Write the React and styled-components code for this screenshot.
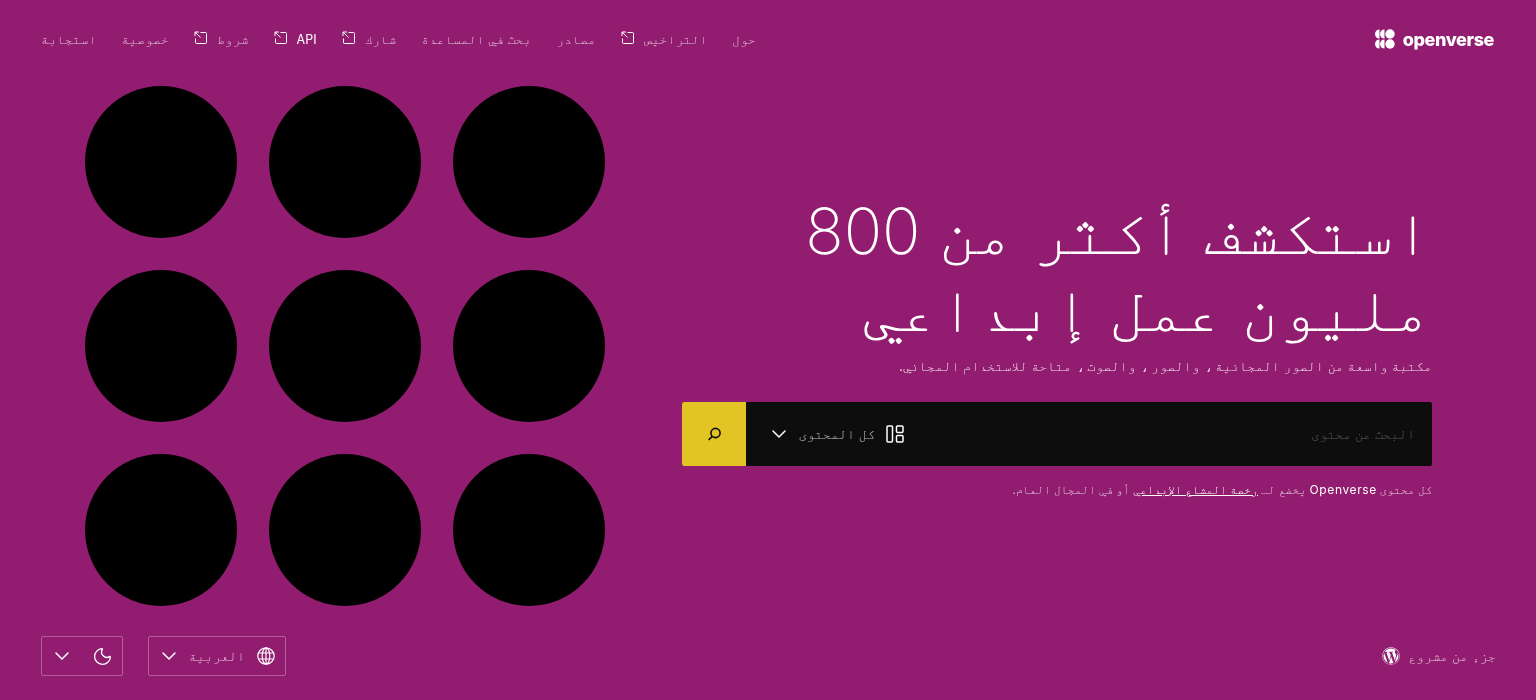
import styled, { createGlobalStyle, css } from "styled-components";
import { ChevronDown, Moon } from "lucide-react";
import { FaWordpress } from "react-icons/fa";

const GlobalStyle = createGlobalStyle`
  html, body {
    margin: 0;
    background: #921c6f;
  }
  * {
    box-sizing: border-box;
  }
`;

const fonts = `Inter, FreeMono, monospace`;

// own layer, so the text gets greyscale antialiasing like the reference
const ownLayer = css`
  will-change: transform;
`;

const Page = styled.div`
  direction: rtl;
  display: flex;
  flex-direction: column;
  height: 700px;
  overflow: hidden;
  background: #921c6f;
  color: #fff;
  font-family: ${fonts};
`;

const Header = styled.header`
  ${ownLayer}
  display: flex;
  align-items: center;
  justify-content: space-between;
  height: 80px;
  padding: 0 42px 2px 41px;
`;

const Logo = styled.a`
  display: flex;
  align-items: center;
  direction: ltr;
  gap: 8px;
  font-size: 18px;
  font-weight: 800;
  letter-spacing: -0.4px;
  color: #fff;
`;

const Nav = styled.nav`
  display: flex;
  align-items: center;
  gap: 25px;
`;

const NavLink = styled.a`
  display: flex;
  align-items: center;
  gap: 9px;
  font-size: ${(p) => (p.$bright ? "12.5px" : "13.2px")};
  color: ${(p) => (p.$bright ? "#fff" : "rgba(255, 255, 255, 0.7)")};

  svg {
    margin-top: -3px;
    color: #fff;
  }
`;

const Main = styled.main`
  flex: 1;
  display: flex;
  align-items: center;
  justify-content: space-between;
  padding: 0 104px 24px 85px;
`;

const Hero = styled.section`
  ${ownLayer}
  width: 750px;
  padding-bottom: 1px;
`;

const Title = styled.h1`
  margin: 0;
  font-size: 63.6px;
  font-weight: 200;
  line-height: 77px;
`;

const Lead = styled.p`
  margin: 10px 0 0;
  font-size: 13.44px;
  line-height: 20px;
  color: rgba(255, 255, 255, 0.85);
`;

const SearchBar = styled.form`
  display: flex;
  align-items: center;
  height: 64px;
  margin-top: 26px;
  background: #0d0d0d;
  border-radius: 2px;
`;

const Placeholder = styled.div`
  flex: 1;
  padding-right: 17px;
  font-size: 13.33px;
  color: rgba(255, 255, 255, 0.3);
`;

const TypeButton = styled.div`
  display: flex;
  align-items: center;
  gap: 11px;
  font-size: 13.33px;
  color: rgba(255, 255, 255, 0.72);

  svg {
    color: #fff;
  }

  svg:last-child {
    margin-right: -3px;
  }
`;

const SearchButton = styled.button`
  display: flex;
  align-items: center;
  justify-content: center;
  width: 64px;
  height: 64px;
  margin-right: 21px;
  border: 0;
  border-radius: 2px 0 0 2px;
  background: #e2c425;
  color: #0d0d0d;
`;

const License = styled.p`
  margin: 15px 0 0;
  font-size: 11.6px;
  line-height: 18px;
  color: rgba(255, 255, 255, 0.75);

  span {
    font-size: 12px;
    letter-spacing: 0.6px;
    color: #fff;
  }

  a {
    text-decoration: underline;
    color: #fff;
  }
`;

const Circles = styled.div`
  display: grid;
  grid-template-columns: repeat(3, 152px);
  gap: 32px;
`;

const Circle = styled.div`
  width: 152px;
  height: 152px;
  border-radius: 50%;
  background: #000;
`;

const Footer = styled.footer`
  ${ownLayer}
  display: flex;
  align-items: center;
  justify-content: space-between;
  height: 40px;
  margin-bottom: 24px;
  padding: 0 40px 0 41px;
`;

const Credit = styled.a`
  display: flex;
  align-items: center;
  gap: 8px;
  font-size: 13.4px;
  color: rgba(255, 255, 255, 0.75);

  svg {
    color: #fff;
  }
`;

const Controls = styled.div`
  display: flex;
  gap: 25px;
`;

const Select = styled.div`
  display: flex;
  align-items: center;
  gap: 8px;
  justify-content: space-between;
  width: ${(p) => p.$width}px;
  height: 40px;
  padding: 0 9px 0 8px;
  border: 1px solid rgba(255, 255, 255, 0.3);
  border-radius: 2px;
  font-size: 13.33px;
  color: rgba(255, 255, 255, 0.7);

  svg {
    color: #fff;
    flex: none;
  }
`;

const SelectLabel = styled.span`
  flex: 1;
  margin-right: 3px;
`;

const ExternalIcon = () => (
  <svg width="14" height="14" viewBox="0 0 14 14" fill="none" stroke="currentColor" strokeWidth="1">
    <path d="M6.5 1.5h5a1 1 0 0 1 1 1v9a1 1 0 0 1-1 1h-9a1 1 0 0 1-1-1V7.5" />
    <path d="M1 1l5.5 5.5M1 1v4M1 1h4" />
  </svg>
);

const LogoMark = () => (
  <svg width="20" height="20" viewBox="0 0 20 20" fill="#fff">
    <path d="M4.5.5a4.5 4.5 0 0 0 0 9z" />
    <path d="M9.5.5a4.5 4.5 0 0 0 0 9z" />
    <circle cx="15" cy="5" r="4.7" />
    <path d="M4.5 10.5a4.5 4.5 0 0 0 0 9z" />
    <path d="M9.5 10.5a4.5 4.5 0 0 0 0 9z" />
    <circle cx="15" cy="15" r="4.7" />
  </svg>
);

const SearchIcon = () => (
  <svg width="16" height="16" viewBox="0 0 16 16" fill="none" stroke="currentColor" strokeWidth="1.6">
    <circle cx="9.5" cy="7" r="4.6" />
    <path d="M6.2 10.4L2.6 14" />
  </svg>
);

const ContentIcon = () => (
  <svg width="18" height="18" viewBox="0 0 18 18" fill="none" stroke="currentColor" strokeWidth="1.5">
    <rect x="1" y="1" width="5.5" height="16" rx="1" />
    <rect x="10.5" y="1" width="6.5" height="6.5" rx="1" />
    <rect x="10.5" y="10.5" width="6.5" height="6.5" rx="1" />
  </svg>
);

const GlobeIcon = () => (
  <svg width="20" height="20" viewBox="0 0 20 20" fill="none" stroke="currentColor" strokeWidth="1.2">
    <circle cx="10" cy="10" r="8.2" />
    <ellipse cx="10" cy="10" rx="3.8" ry="8.2" />
    <path d="M10 1.8v16.4M2.6 7h14.8M2.6 13h14.8" />
  </svg>
);

const navItems = [
  { label: "حول" },
  { label: "التراخيص", external: true },
  { label: "مصادر" },
  { label: "بحث في المساعدة" },
  { label: "شارك", external: true },
  { label: "API", external: true, bright: true },
  { label: "شروط", external: true },
  { label: "خصوصية" },
  { label: "استجابة" },
];

const App = () => {
  return (
    <Page>
      <GlobalStyle />
      <Header>
        <Logo>
          <LogoMark />
          openverse
        </Logo>
        <Nav>
          {navItems.map((item) => (
            <NavLink key={item.label} $bright={item.bright}>
              {item.label}
              {item.external && <ExternalIcon />}
            </NavLink>
          ))}
        </Nav>
      </Header>
      <Main>
        <Hero>
          <Title>استكشف أكثر من 800 مليون عمل إبداعي</Title>
          <Lead>مكتبة واسعة من الصور المجانية ، والصور ، والصوت ، متاحة للاستخدام المجاني.</Lead>
          <SearchBar>
            <Placeholder>البحث عن محتوى</Placeholder>
            <TypeButton>
              <ContentIcon />
              كل المحتوى
              <ChevronDown size={24} strokeWidth={1.5} />
            </TypeButton>
            <SearchButton type="button">
              <SearchIcon />
            </SearchButton>
          </SearchBar>
          <License>
            كل محتوى <span>Openverse</span> يخضع لـ <a>رخصة المشاع الإبداعي</a> أو في المجال العام.
          </License>
        </Hero>
        <Circles>
          {Array.from({ length: 9 }, (_, i) => (
            <Circle key={i} />
          ))}
        </Circles>
      </Main>
      <Footer>
        <Credit>
          جزء من مشروع
          <FaWordpress size={18} />
        </Credit>
        <Controls>
          <Select $width={138}>
            <GlobeIcon />
            <SelectLabel>العربية</SelectLabel>
            <ChevronDown size={24} strokeWidth={1.5} />
          </Select>
          <Select $width={82}>
            <Moon size={21} strokeWidth={1.5} />
            <ChevronDown size={24} strokeWidth={1.5} />
          </Select>
        </Controls>
      </Footer>
    </Page>
  );
};

export default App;
